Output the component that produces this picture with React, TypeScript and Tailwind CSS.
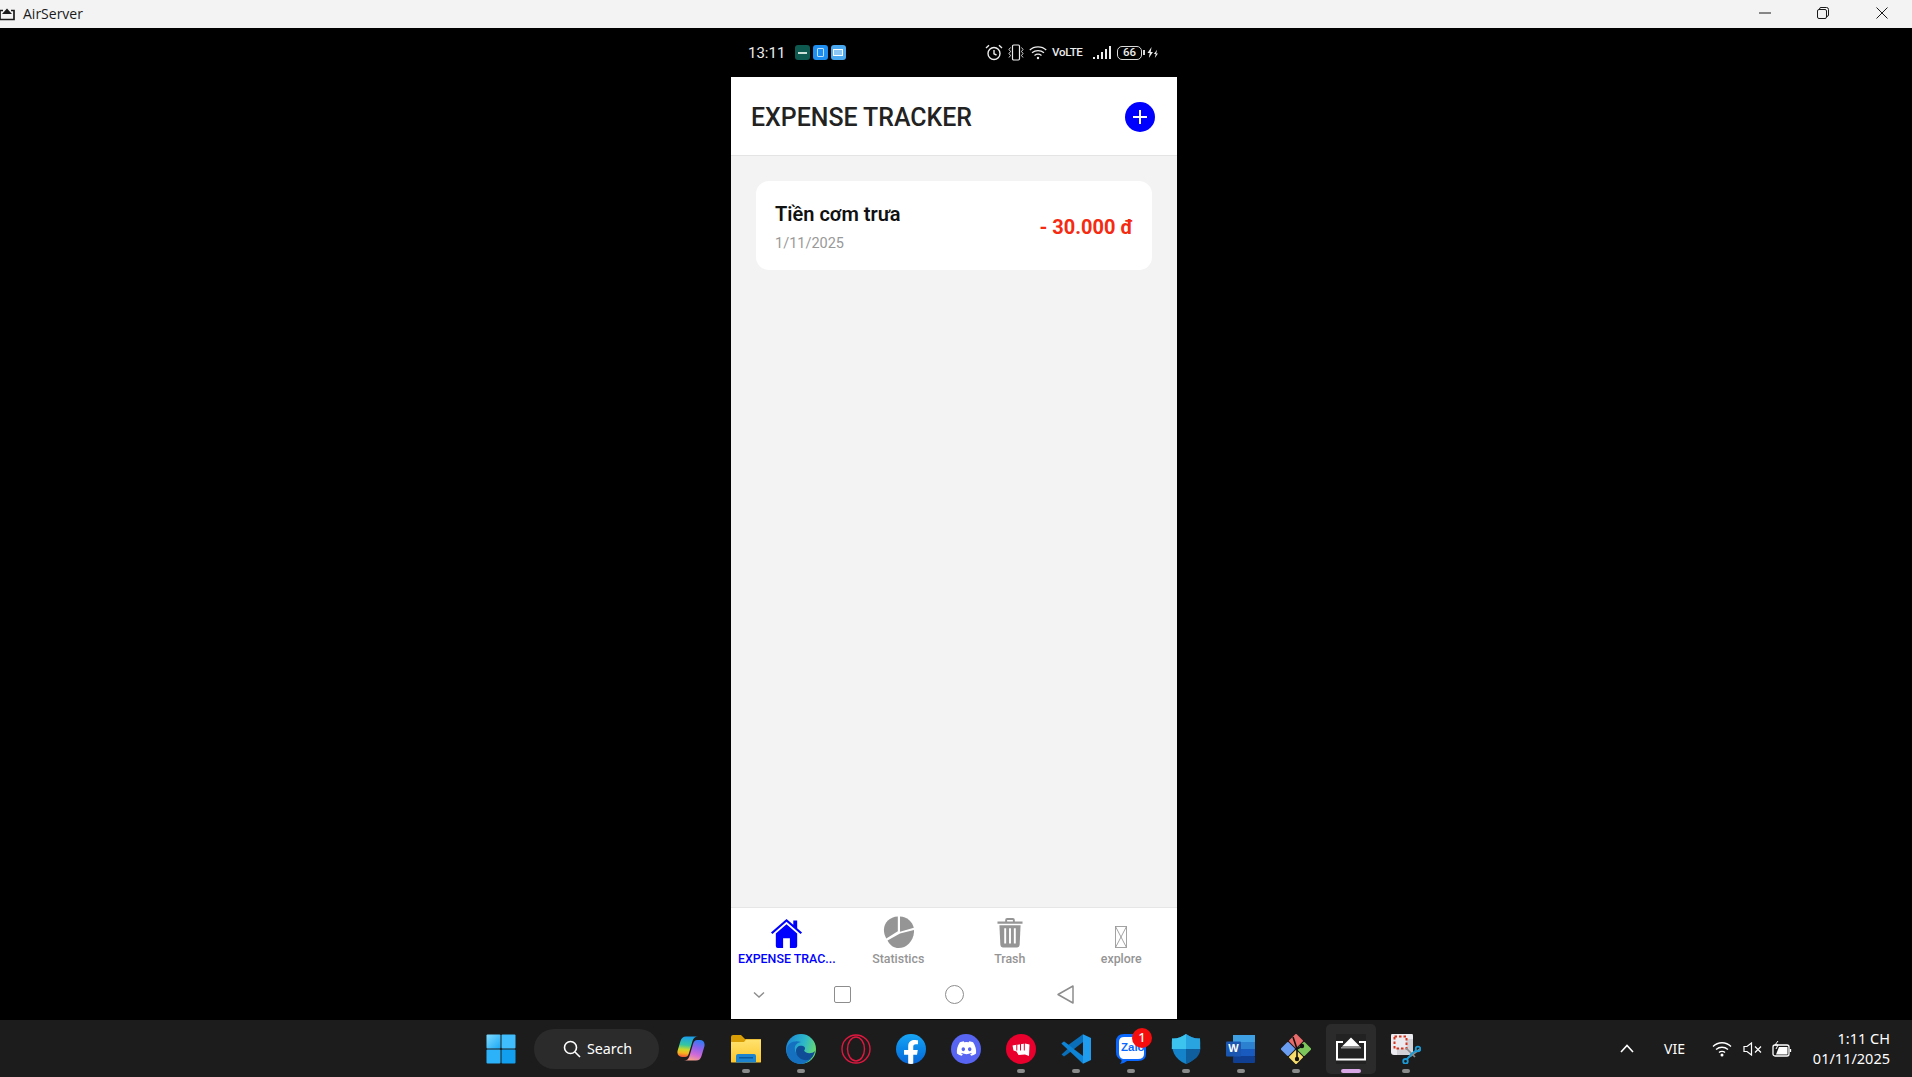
import React from "react";
import { FaDiscord, FaFacebookF } from "react-icons/fa";

const Win = () => (
  <svg width="30" height="30" viewBox="0 0 30 30">
    <defs>
      <linearGradient id="w1" x1="0" y1="0" x2="1" y2="1"><stop offset="0" stopColor="#7fdcff" /><stop offset="1" stopColor="#1aa8f5" /></linearGradient>
    </defs>
    <rect x="0.5" y="0.5" width="14" height="14" rx="1" fill="url(#w1)" />
    <rect x="15.5" y="0.5" width="14" height="14" rx="1" fill="#3fbdfc" />
    <rect x="0.5" y="15.5" width="14" height="14" rx="1" fill="#2cb2f8" />
    <rect x="15.5" y="15.5" width="14" height="14" rx="1" fill="#129ff0" />
  </svg>
);

const Copilot = () => (
  <svg width="28" height="25" viewBox="0 0 28 25">
    <defs>
      <linearGradient id="c1" x1="0.3" y1="0" x2="0.2" y2="1"><stop offset="0" stopColor="#1c9fe8" /><stop offset="0.4" stopColor="#35c6a0" /><stop offset="0.62" stopColor="#c8d82c" /><stop offset="0.8" stopColor="#f6b41e" /><stop offset="1" stopColor="#ee4f3a" /></linearGradient>
      <linearGradient id="c2" x1="0.7" y1="0" x2="0.4" y2="1"><stop offset="0" stopColor="#2f7df5" /><stop offset="0.35" stopColor="#8a63ea" /><stop offset="0.7" stopColor="#d06ad8" /><stop offset="1" stopColor="#f7a08c" /></linearGradient>
    </defs>
    <path d="M9 0.500 C6 0.500 4.500 2 3.500 5 L0.800 14 C-0.500 18 1.500 21 5 21 H8 C10 21 11 20 12 17 L15.500 5 C16.500 2 18 0.500 21 0.500Z" fill="url(#c1)" />
    <path d="M19 24.500 C22 24.500 23.500 23 24.500 20 L27.200 11 C28.500 7 26.500 4 23 4 H20 C18 4 17 5 16 8 L12.500 20 C11.500 23 10 24.500 7 24.500Z" fill="url(#c2)" />
  </svg>
);

const Folder = () => (
  <svg width="30" height="28" viewBox="0 0 30 28">
    <defs>
      <linearGradient id="f1" x1="0" y1="0" x2="0" y2="1"><stop offset="0" stopColor="#ffe26e" /><stop offset="1" stopColor="#fcc62c" /></linearGradient>
    </defs>
    <path d="M0 2 Q0 0 2 0 H10 L14 4 H30 V10 H0Z" fill="#d99e06" />
    <path d="M0 7 H13 L15 4.500 H30 V27 Q30 27.500 29 27.500 H1 Q0 27.500 0 27Z" fill="url(#f1)" />
    <path d="M5 27.500 V21 Q5 19 7 19 H23 Q25 19 25 21 V27.500Z" fill="#1d85cf" />
    <rect x="8" y="22" width="14" height="1.500" fill="#0b5a9c" />
  </svg>
);

const Edge = () => (
  <svg width="30" height="30" viewBox="0 0 30 30">
    <defs>
      <linearGradient id="e1" x1="0" y1="0.3" x2="1" y2="0.6"><stop offset="0" stopColor="#1b88d6" /><stop offset="0.55" stopColor="#2db7c9" /><stop offset="1" stopColor="#6bdc6a" /></linearGradient>
    </defs>
    <circle cx="15" cy="15" r="15" fill="url(#e1)" />
    <path d="M0.500 17 C1 8 9 6 15 8 C10 9 8 12 9 16 C10 22 18 26 25 25 C21 29 17 30 15 30 C7 30 1 25 0.500 17Z" fill="#1570c0" />
    <path d="M10 17 C10 13 13 11 17 12 C20 13 19 16 18 16.500 C20 20 26 20 29 17 C28 21 26 25 22 26 C16 27 10 23 10 17Z" fill="#0f4e96" />
  </svg>
);

const Opera = () => (
  <svg width="30" height="30" viewBox="0 0 30 30" fill="none" stroke="#e0173f" strokeWidth="1.400">
    <circle cx="15" cy="15" r="14" />
    <ellipse cx="15" cy="15" rx="8.500" ry="12" />
  </svg>
);

const Fb = () => (
  <div className="relative flex h-[30px] w-[30px] items-end justify-center overflow-hidden rounded-full bg-gradient-to-b from-[#18a5f5] to-[#0a66d8]">
    <FaFacebookF className="h-[26px] w-[26px] translate-y-[2px] text-white" />
  </div>
);

const Discord = () => (
  <div className="flex h-[30px] w-[30px] items-center justify-center rounded-full bg-[#5865f2]">
    <FaDiscord className="h-[21px] w-[21px] text-white" />
  </div>
);

const Riot = () => (
  <svg width="30" height="30" viewBox="0 0 30 30">
    <circle cx="15" cy="15" r="15" fill="#e9002d" />
    <path d="M6.500 11.500 L19 9.500 L23.500 10.500 L23 22 L19 20.500 L12.500 21 L10.500 17.500 L7.500 16.500Z" fill="#fff" />
    <path d="M10.800 10.500 V16.500 M14.500 10 V16.500 M18.300 9 V16.500" stroke="#e9002d" strokeWidth="1" />
  </svg>
);

const VsCode = () => (
  <svg width="30" height="30" viewBox="0 0 30 30">
    <path d="M22 0.300 L30 4 V26 L22 29.700Z" fill="#209cee" />
    <path d="M22 0.300 V8 L7 19.800 L3 22.500 L0.500 20.500 L6.500 15 L0.500 9.500 L3 7.500 L7.500 10.700 Z" fill="#0a6fb8" />
    <path d="M3 7.500 L22 22 V29.700 L0.500 9.500Z" fill="#0e84d6" />
  </svg>
);

const Zalo = () => (
  <div className="relative h-[30px] w-[30px]">
    <svg width="30" height="30" viewBox="0 0 30 30" className="absolute left-0 top-0">
      <path d="M8 0 H22 Q30 0 30 8 V20 Q30 27 22 27 H11 Q8 29.500 4 30 Q6 28 5.500 26 Q0 24 0 18 V8 Q0 0 8 0Z" fill="#0a68ff" />
      <path d="M8 3 H24 Q28 3 28 8 V20 Q28 25 22 25 H7 Q3 24 3 19 V8 Q3 3 8 3Z" fill="#fff" />
    </svg>
    <span className="absolute left-[5px] top-[7px] font-['Liberation_Sans',sans-serif] text-[11.500px] font-bold leading-[12px] text-[#0a68ff]">Zalo</span>
    <span className="absolute left-[16px] top-[-6px] flex h-[20px] w-[20px] items-center justify-center rounded-full bg-[#f50d0d] font-['Noto_Sans',sans-serif] text-[13px] font-medium leading-none text-white">1</span>
  </div>
);

const Shield = () => (
  <svg width="30" height="30" viewBox="0 0 30 30">
    <path d="M15 0 C19 3 24 5 29 4.500 C30 16 27 25 15 30 C3 25 0 16 1 4.500 C6 5 11 3 15 0Z" fill="#1583c9" />
    <path d="M15 0 C19 3 24 5 29 4.500 L29.300 15 H15Z" fill="#2aa4e0" />
    <path d="M15 0 C11 3 6 5 1 4.500 L0.800 15 H15Z" fill="#3dc4ee" />
    <path d="M15 15 H29.300 C29 22 24 26 15 30Z" fill="#0f5f9f" />
  </svg>
);

const Word = () => (
  <div className="relative h-[30px] w-[30px]">
    <svg width="30" height="30" viewBox="0 0 30 30" className="absolute left-[0px] top-0">
      <rect x="7" y="1" width="22" height="7" fill="#40a0e4" />
      <rect x="7" y="8" width="22" height="7" fill="#2b80d0" />
      <rect x="7" y="15" width="22" height="7" fill="#185abd" />
      <rect x="7" y="22" width="22" height="7" rx="1" fill="#103f91" />
      <rect x="0" y="7.500" width="15" height="15" rx="1" fill="#1a56b0" />
    </svg>
    <span className="absolute left-0 top-[7.500px] flex h-[15px] w-[15px] items-center justify-center font-['Liberation_Sans',sans-serif] text-[11px] font-bold leading-none text-white">W</span>
  </div>
);

const Git = () => (
  <svg width="30" height="30" viewBox="0 0 30 30">
    <g transform="rotate(45 15 15)">
      <rect x="4" y="4" width="10.500" height="10.500" rx="1" fill="#e86a6a" />
      <rect x="15.500" y="4" width="10.500" height="10.500" rx="1" fill="#7cc65c" />
      <rect x="4" y="15.500" width="10.500" height="10.500" rx="1" fill="#6a9cf0" />
      <rect x="15.500" y="15.500" width="10.500" height="10.500" rx="1" fill="#f6dc6a" />
    </g>
    <path d="M12 3 L16 15 V23 M16 15 L21 12" stroke="#111" strokeWidth="1.600" fill="none" />
    <circle cx="16" cy="25" r="2.200" fill="#111" />
    <circle cx="21" cy="12" r="2.200" fill="#111" />
  </svg>
);

const AirIcon = () => (
  <div className="flex h-[30px] w-[30px] items-center justify-center bg-[#222222]">
    <svg width="30" height="24" viewBox="0 0 30 24" fill="none">
      <path d="M7 5 H1 V22.500 H29 V5 H23" stroke="#fff" strokeWidth="2" />
      <path d="M15 0.500 L24 9.500 H6 Z" fill="#fff" />
      <rect x="5" y="10" width="20" height="1.500" fill="#fff" opacity="0.500" />
    </svg>
  </div>
);

const Snip = () => (
  <svg width="30" height="30" viewBox="0 0 30 30" fill="none">
    <rect x="0" y="-1" width="22" height="22" rx="3" fill="#ecebf0" />
    <rect x="6" y="5" width="16" height="16" fill="#d2d2d6" />
    <rect x="3.500" y="2.500" width="12" height="12" fill="#ecebf0" stroke="#d5341c" strokeWidth="2" strokeDasharray="2.500 2" />
    <path d="M15 14 L24 23 M29 15 L19 22.500" stroke="#8c8c8c" strokeWidth="1.700" />
    <circle cx="27" cy="15" r="2.300" stroke="#1a9ad6" strokeWidth="1.800" />
    <circle cx="14.500" cy="27.300" r="2.300" stroke="#1a9ad6" strokeWidth="1.800" />
    <path d="M20 21 L15.500 25.500 M25 16.500 L19 21" stroke="#1a9ad6" strokeWidth="1.800" />
  </svg>
);

type Entry = { key: string; icon: React.ReactNode; dot?: boolean; active?: boolean };

const entries: Entry[] = [
  { key: "copilot", icon: <Copilot /> },
  { key: "files", icon: <Folder />, dot: true },
  { key: "edge", icon: <Edge />, dot: true },
  { key: "opera", icon: <Opera /> },
  { key: "fb", icon: <Fb /> },
  { key: "discord", icon: <Discord /> },
  { key: "riot", icon: <Riot />, dot: true },
  { key: "code", icon: <VsCode />, dot: true },
  { key: "zalo", icon: <Zalo />, dot: true },
  { key: "shield", icon: <Shield />, dot: true },
  { key: "word", icon: <Word />, dot: true },
  { key: "git", icon: <Git />, dot: true },
  { key: "air", icon: <AirIcon />, active: true },
  { key: "snip", icon: <Snip />, dot: true },
];

const TaskItem = ({ e }: { e: Entry }) => (
  <div className="relative flex h-[57px] w-[55px] shrink-0 items-center justify-center">
    {e.active && <div className="absolute left-[2.500px] top-[4px] h-[50px] w-[50px] rounded-[5px] bg-[#2b2b2b]" />}
    <div className="relative">{e.icon}</div>
    {e.dot && <div className="absolute bottom-[4px] left-[23.500px] h-[4px] w-[8px] rounded-full bg-[#8a8a8a]" />}
    {e.active && <div className="absolute bottom-[4px] left-[17.500px] h-[4px] w-[20px] rounded-full bg-[#d9a6e6]" />}
  </div>
);

const Alarm = () => (
  <svg width="18" height="17" viewBox="0 0 18 17" fill="none" stroke="#ececec" strokeWidth="1.400">
    <circle cx="9" cy="9.500" r="6" />
    <path d="M9 6 V9.800 L11.500 11" />
    <path d="M1 4 L4 1.300 M17 4 L14 1.300" />
  </svg>
);

const Vibrate = () => (
  <svg width="16" height="17" viewBox="0 0 16 17" fill="none" stroke="#ececec" strokeWidth="1.200">
    <rect x="4.500" y="1" width="7" height="15" rx="1.200" />
    <path d="M2.500 3.500 L1 5.500 L2.500 7.500 L1 9.500 L2.500 11.500 L1 13.500 M13.500 3.500 L15 5.500 L13.500 7.500 L15 9.500 L13.500 11.500 L15 13.500" strokeWidth="0.900" />
  </svg>
);

const PhoneWifi = () => (
  <svg width="18" height="15" viewBox="0 0 18 15" fill="none" stroke="#ececec" strokeWidth="1.300">
    <path d="M0.800 5 C5 0.800 13 0.800 17.200 5" />
    <path d="M3 7.800 C6.500 5 11.500 5 15 7.800" />
    <path d="M5.500 10.500 C7.500 9 10.500 9 12.500 10.500" />
    <circle cx="9" cy="13" r="1.200" fill="#ececec" stroke="none" />
  </svg>
);

const Signal = () => (
  <div className="flex h-[13px] items-end gap-[1.500px]">
    <div className="h-[2px] w-[2.400px] bg-[#ececec]" />
    <div className="h-[4px] w-[2.400px] bg-[#ececec]" />
    <div className="h-[7px] w-[2.400px] bg-[#ececec]" />
    <div className="h-[10px] w-[2.400px] bg-[#ececec]" />
    <div className="h-[13px] w-[2.400px] bg-[#ececec]" />
  </div>
);

const AppTile = ({ bg, children }: { bg: string; children: React.ReactNode }) => (
  <div className={`flex h-[14.500px] w-[14.500px] items-center justify-center rounded-[3px] ${bg}`}>{children}</div>
);

const NavIcon = ({ children, label, active }: { children: React.ReactNode; label: string; active?: boolean }) => (
  <div className="flex min-w-0 flex-col items-center">
    <div className="flex h-[32px] items-end justify-center">{children}</div>
    <div className={`mt-[4px] w-full truncate px-[6px] text-center text-[12.400px] font-medium leading-[14px] ${active ? "text-[#0000ff]" : "text-[#959595]"}`}>{label}</div>
  </div>
);

const Home = () => (
  <svg width="33" height="31" viewBox="0 0 34 32" preserveAspectRatio="none">
    <path d="M17 2 L24 8 V3.500 H28 V11.500 L33 16 L31.500 17.500 L17 4.800 L2.500 17.500 L1 16Z" fill="#0000ff" />
    <path d="M17 7.500 L6 17 V30 Q6 32 8 32 H13.500 V22 H20.500 V32 H26 Q28 32 28 30 V17Z" fill="#0000ff" />
  </svg>
);

const Pie = () => (
  <svg width="31" height="32" viewBox="0 0 31 32">
    <path d="M14.800 0.500 V15.300 L3.300 22.500 C-3 11 4 1 14.800 0.500Z" fill="#959595" />
    <path d="M17 0.500 C24 0.500 29.500 6 30.800 11.800 L17 15.800Z" fill="#959595" />
    <path d="M31 14 C31.500 24 24 32 15.500 32 C11 32 7 29.500 4.500 24.500 L17 17.500Z" fill="#959595" />
  </svg>
);

const Trash = () => (
  <svg width="26" height="31" viewBox="0 0 27 31">
    <path d="M8.500 4 V2.500 Q8.500 0.500 10.500 0.500 H16.500 Q18.500 0.500 18.500 2.500 V4 H26.500 V6.500 H0.500 V4Z M10.500 4 H16.500 V2.500 H10.500Z" fill="#959595" fillRule="evenodd" />
    <path d="M2.500 8 H24.500 L23.500 28.500 Q23.300 31 21 31 H6 Q3.700 31 3.500 28.500Z" fill="#959595" />
    <path d="M8.500 11 V27 M13.500 11 V27 M18.500 11 V27" stroke="#fff" strokeWidth="2" />
  </svg>
);

const Missing = () => (
  <svg width="12" height="22" viewBox="0 0 12 22" fill="none" stroke="#9a9a9a" strokeWidth="0.900">
    <rect x="0.500" y="0.500" width="11" height="21" />
    <path d="M0.500 0.500 L11.500 21.500 M11.500 0.500 L0.500 21.500" />
  </svg>
);

export default function App() {
  return (
    <div className="flex h-[1077px] w-[1912px] flex-col overflow-hidden bg-black font-['Roboto',sans-serif]">
      <header className="flex h-[28px] shrink-0 items-center bg-[#f3f3f3] text-[#1a1a1a]">
        <div className="ml-[-1px] flex w-[24px] shrink-0 items-center">
          <svg width="16" height="13" viewBox="0 0 16 13" fill="none">
            <path d="M4 2.500 H1 V11.500 H15 V2.500 H12" stroke="#1a1a1a" strokeWidth="1.700" />
            <path d="M8 0.500 L13 6 H3Z" fill="#1a1a1a" />
          </svg>
        </div>
        <span className="font-['Open_Sans',sans-serif] text-[14px] leading-none">AirServer</span>
        <div className="ml-auto flex items-center pb-[3px]">
          <div className="flex w-[58px] justify-center">
            <svg width="12" height="12" viewBox="0 0 12 12"><path d="M0 6 H12" stroke="#1a1a1a" strokeWidth="1" /></svg>
          </div>
          <div className="flex w-[58px] justify-center">
            <svg width="12" height="12" viewBox="0 0 12 12" fill="none" stroke="#1a1a1a" strokeWidth="1">
              <rect x="0.500" y="2.500" width="9" height="9" rx="1.500" />
              <path d="M2.500 2.500 V2 Q2.500 0.500 4 0.500 H9.500 Q11.500 0.500 11.500 2.500 V8 Q11.500 9.500 9.500 9.500" />
            </svg>
          </div>
          <div className="flex w-[60px] justify-center">
            <svg width="12" height="12" viewBox="0 0 12 12"><path d="M0.500 0.500 L11.500 11.500 M11.500 0.500 L0.500 11.500" stroke="#1a1a1a" strokeWidth="1" /></svg>
          </div>
        </div>
      </header>

      <main className="flex min-h-0 flex-1 bg-black pl-[731px]">
        <div className="flex h-[991px] w-[446px] flex-col">
          <div className="flex h-[49px] shrink-0 items-center pl-[17px] pr-[19px] text-[#ececec]">
            <span className="w-[47px] pt-[1px] text-[15px] leading-none">13:11</span>
            <div className="flex gap-[3.500px]">
              <AppTile bg="bg-[#0e5a50]"><div className="h-[2px] w-[9px] bg-[#cfe0d8]" /></AppTile>
              <AppTile bg="bg-[#1e8ef0]"><div className="h-[9px] w-[7px] rounded-[1px] border border-[#bfe0ff]" /></AppTile>
              <AppTile bg="bg-[#49a8ef]"><div className="h-[7px] w-[10px] border border-white bg-[#8cc6f5]" /></AppTile>
            </div>
            <div className="ml-auto flex items-center">
              <Alarm />
              <div className="ml-[5px]"><Vibrate /></div>
              <div className="ml-[5px]"><PhoneWifi /></div>
              <span className="ml-[5px] w-[29px] whitespace-nowrap text-[11.500px] font-medium leading-none tracking-[-0.300px]">VoLTE</span>
              <div className="ml-[12px]"><Signal /></div>
              <div className="ml-[6px] flex items-center">
                <div className="flex h-[14px] w-[25px] items-center justify-center rounded-[5px] border-[1.500px] border-[#d8d8d8] text-[11.500px] font-medium leading-none">66</div>
                <div className="ml-[1px] h-[5px] w-[2px] bg-[#d8d8d8]" />
              </div>
              <svg className="ml-[2px]" width="11" height="13" viewBox="0 0 12 12" fill="#ececec">
                <path d="M5 0 L0.500 6.500 H3 L2 12 L6.500 5.500 H4Z" />
                <path d="M11 3 L7.500 7.500 H9.500 L8.500 12 L12 7 H10Z" />
              </svg>
            </div>
          </div>

          <div className="flex h-[79px] shrink-0 items-center justify-between border-b border-[#e4e4e4] bg-white pl-[20px] pr-[22px] shadow-[0_1px_3px_rgba(0,0,0,0.12)]">
            <h1 className="pt-[5px] text-[24.900px] font-medium leading-none text-[#222222]">EXPENSE TRACKER</h1>
            <div className="mt-[1px] flex h-[30px] w-[30px] items-center justify-center rounded-full bg-[#0000ff]">
              <svg width="14" height="14" viewBox="0 0 14 14"><path d="M7 0 V14 M0 7 H14" stroke="#fff" strokeWidth="2" /></svg>
            </div>
          </div>

          <div className="min-h-0 flex-1 bg-[#f3f3f3] px-[25px] pt-[25px]">
            <div className="flex h-[89px] items-center justify-between rounded-[13px] bg-white pl-[19px] pr-[19px]">
              <div className="pt-[3px]">
                <div className="text-[20px] font-semibold leading-[24px] text-[#111111]">Tiền cơm trưa</div>
                <div className="mt-[9px] text-[14.500px] leading-[17px] text-[#999999]">1/11/2025</div>
              </div>
              <div className="pt-[2px] text-[20px] font-bold leading-none text-[#f52a10]">- 30.000 đ</div>
            </div>
          </div>

          <nav className="shrink-0 border-t border-[#e6e6e6] bg-white">
            <div className="grid h-[67px] grid-cols-4 pt-[8px]">
              <NavIcon label="EXPENSE TRAC..." active><Home /></NavIcon>
              <NavIcon label="Statistics"><Pie /></NavIcon>
              <NavIcon label="Trash"><Trash /></NavIcon>
              <NavIcon label="explore"><Missing /></NavIcon>
            </div>
            <div className="grid h-[44px] grid-cols-[56px_111.500px_111.500px_111.500px_55.500px] items-center pb-[5px]">
              <div className="flex justify-center">
                <svg width="12" height="8" viewBox="0 0 12 8" fill="none" stroke="#8d8d8d" strokeWidth="1.400"><path d="M1 1.500 L6 6 L11 1.500" /></svg>
              </div>
              <div className="flex justify-center">
                <div className="h-[17px] w-[17px] rounded-[2px] border-[1.500px] border-[#8d8d8d]" />
              </div>
              <div className="flex justify-center">
                <div className="h-[19px] w-[19px] rounded-full border-[1.500px] border-[#8d8d8d]" />
              </div>
              <div className="flex justify-center">
                <svg width="17" height="19" viewBox="0 0 17 19" fill="none" stroke="#8d8d8d" strokeWidth="1.500" strokeLinejoin="round"><path d="M16 1 V18 L1 9.500Z" /></svg>
              </div>
              <div />
            </div>
          </nav>
        </div>
      </main>

      <footer className="flex h-[57px] shrink-0 items-center bg-[#1c1c1c] font-['Noto_Sans',sans-serif] text-white">
        <div className="ml-[473.500px] flex h-[57px] w-[55px] shrink-0 items-center justify-center"><Win /></div>
        <div className="ml-[5.500px] flex h-[40px] w-[125px] shrink-0 items-center justify-center gap-[6px] rounded-full bg-[#2b2b2b] pl-[2px]">
          <svg width="18" height="18" viewBox="0 0 18 18" fill="none" stroke="#fff" strokeWidth="1.600"><circle cx="7.500" cy="7.500" r="6" /><path d="M12 12 L17 17" /></svg>
          <span className="pt-[1px] text-[14.300px] leading-none">Search</span>
        </div>
        <div className="ml-[4.500px] flex">
          {entries.map((e) => <TaskItem key={e.key} e={e} />)}
        </div>
        <div className="ml-auto flex items-center pr-[22px]">
          <svg width="14" height="9" viewBox="0 0 14 9" fill="none" stroke="#fff" strokeWidth="1.600"><path d="M1 8 L7 1.500 L13 8" /></svg>
          <span className="ml-[30px] text-[14px] leading-none">VIE</span>
          <svg className="ml-[27px]" width="20" height="16" viewBox="0 0 20 16" fill="none" stroke="#fff" strokeWidth="1.300">
            <path d="M1 5.500 C6 0.500 14 0.500 19 5.500" />
            <path d="M4 8.500 C7.500 5.500 12.500 5.500 16 8.500" />
            <path d="M7 11.500 C8.500 10 11.500 10 13 11.500" />
            <circle cx="10" cy="14" r="1.500" fill="#fff" stroke="none" />
          </svg>
          <svg className="ml-[11px]" width="19" height="14" viewBox="0 0 19 14" fill="none" stroke="#fff" strokeWidth="1.200">
            <path d="M1 4.500 H4 L8.500 1 V13 L4 9.500 H1Z" />
            <path d="M12 4.500 L18 10.500 M18 4.500 L12 10.500" />
          </svg>
          <svg className="ml-[10px]" width="20" height="16" viewBox="0 0 20 16" fill="none" stroke="#fff" strokeWidth="1.300">
            <rect x="1" y="4" width="16" height="11" rx="2" />
            <path d="M4 13.500 L7 6 H15.500 V13.500Z" fill="#fff" stroke="none" />
            <path d="M18.500 8 V11" />
            <path d="M6 0 L3 4 H6 L4 8" strokeWidth="1" />
          </svg>
          <div className="ml-[15px] flex w-[83px] flex-col items-end pb-[2px] text-[14.500px] leading-[20px]">
            <span>1:11 CH</span>
            <span>01/11/2025</span>
          </div>
        </div>
      </footer>
    </div>
  );
}
